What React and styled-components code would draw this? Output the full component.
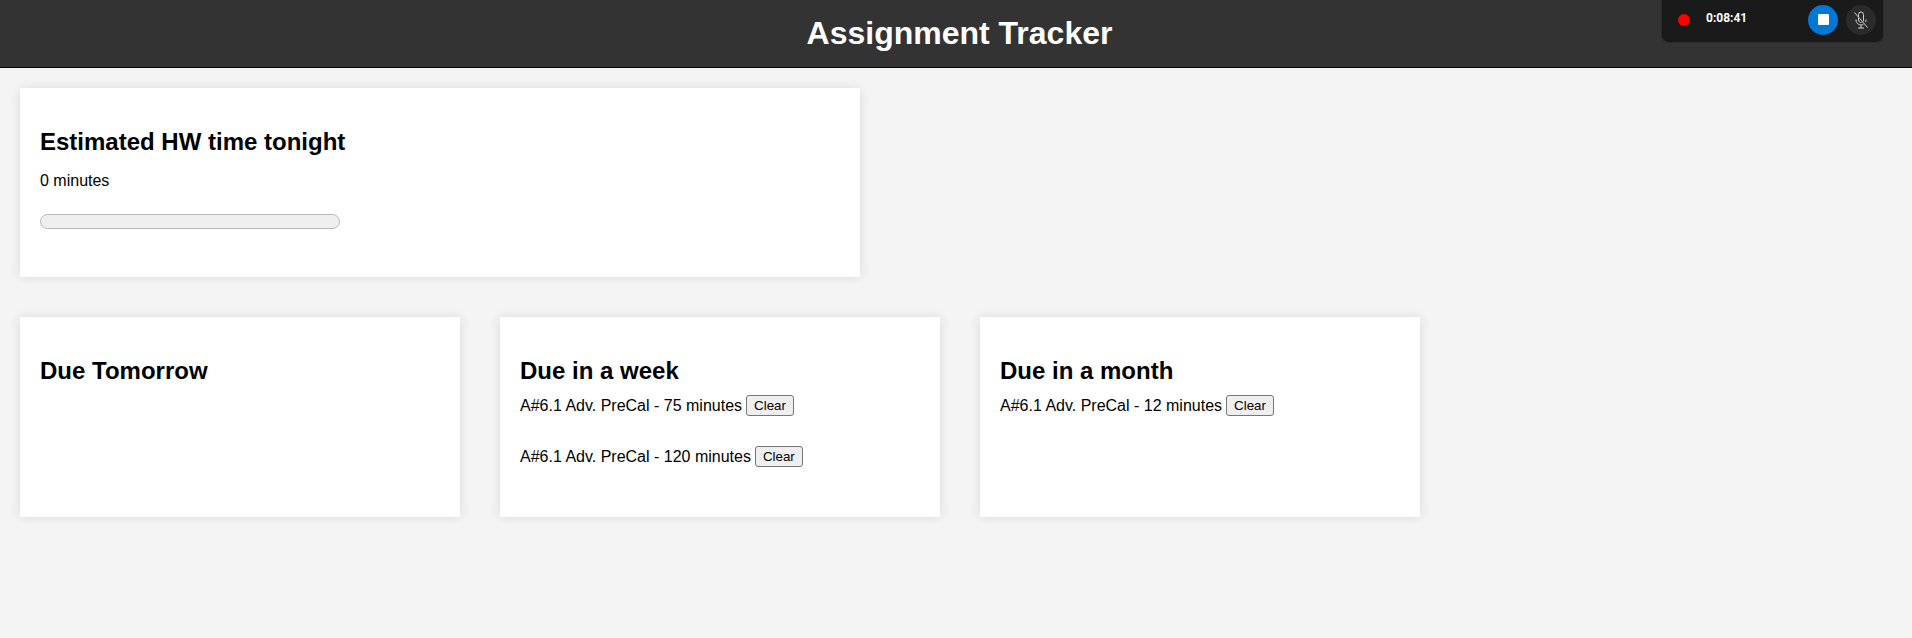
import * as React from 'react';
import styled, { createGlobalStyle } from 'styled-components';

const GlobalStyle = createGlobalStyle`
  html, body {
    margin: 0;
    padding: 0;
    min-height: 638px;
    background: #f4f4f4;
    color: #000;
    font-family: "Liberation Sans", Arial, sans-serif;
    font-size: 16px;
    overflow: hidden;
  }
`;

const Header = styled.header`
  position: relative;
  height: 67px;
  padding-left: 7px;
  display: flex;
  align-items: center;
  justify-content: center;
  background: #333;
  border-bottom: 1px solid #000;
`;

const PageTitle = styled.h1`
  margin: 0;
  color: #fff;
  font-size: 32px;
  font-weight: bold;
`;

const Recorder = styled.div`
  position: absolute;
  top: -1px;
  left: 1661px;
  width: 223px;
  height: 44px;
  box-sizing: border-box;
  display: flex;
  align-items: center;
  padding: 0 7px 2px 16px;
  background: #1a1a1a;
  border: 1px solid #2c2c2c;
  border-top: 0;
  border-radius: 0 0 8px 8px;
`;

const RecDot = styled.span`
  width: 12px;
  height: 12px;
  border-radius: 50%;
  background: #f00;
`;

const Timer = styled.span`
  margin: 0 auto 3px 16px;
  color: #fff;
  font-family: Roboto, sans-serif;
  font-size: 12px;
  font-weight: 700;
`;

const RoundButton = styled.span`
  width: 30px;
  height: 30px;
  margin-left: 8px;
  border-radius: 50%;
  display: flex;
  align-items: center;
  justify-content: center;
  background: ${props => (props.$primary ? '#0078d4' : '#2b2b2b')};
`;

const StopSquare = styled.span`
  width: 11px;
  height: 11px;
  border-radius: 1px;
  background: #fff;
`;

const Main = styled.main`
  padding: 20px;
  display: flex;
  flex-direction: column;
  gap: 40px;
`;

const Row = styled.div`
  display: flex;
  gap: 40px;
`;

const Card = styled.section`
  box-sizing: border-box;
  width: ${props => props.$width}px;
  height: ${props => props.$height}px;
  padding: 40px 20px 20px;
  background: #fff;
  box-shadow: 0 0 10px rgba(0, 0, 0, 0.1);
`;

const CardTitle = styled.h2`
  margin: 0 0 ${props => props.$gap}px;
  font-size: 24px;
  line-height: 27px;
  font-weight: bold;
`;

const Minutes = styled.p`
  margin: 0 0 24px;
  line-height: 19px;
`;

const Progress = styled.div`
  box-sizing: border-box;
  width: 300px;
  height: 15px;
  background: #efefef;
  border: 1px solid #b8b8b8;
  border-radius: 8px;
`;

const Item = styled.div`
  height: 21px;
  margin-bottom: 30px;
  display: flex;
  align-items: center;
  gap: 4px;
  line-height: 21px;
`;

const ClearButton = styled.button`
  box-sizing: border-box;
  height: 21px;
  padding: 1px 7px;
  font-family: "Liberation Sans", Arial, sans-serif;
  font-size: 13.33px;
  color: #000;
  background: #efefef;
  border: 1px solid #767676;
  border-radius: 3px;
`;

const MicOff = () => (
  <svg width="18" height="18" viewBox="0 0 18 18" fill="none" stroke="#d0d0d0" strokeWidth="1">
    <path d="M6.5 6V3.5a2.5 2.5 0 0 1 5 0v5.5a2.5 2.5 0 0 1-.7 1.7" />
    <path d="M6.5 7v2a2.5 2.5 0 0 0 3.2 2.4" />
    <path d="M4 8.500v.5a5 5 0 0 0 7.500 4.300M14 8.500v.5a5 5 0 0 1-.5 2.200" />
    <path d="M9 14v3M6 17h6M2.500 1.500l13 15" />
  </svg>
);

const columns = [
  { title: 'Due Tomorrow', items: [] },
  { title: 'Due in a week', items: ['A#6.1 Adv. PreCal - 75 minutes', 'A#6.1 Adv. PreCal - 120 minutes'] },
  { title: 'Due in a month', items: ['A#6.1 Adv. PreCal - 12 minutes'] },
];

export default function App() {
  return (
    <>
      <GlobalStyle />
      <Header>
        <PageTitle>Assignment Tracker</PageTitle>
        <Recorder>
          <RecDot />
          <Timer>0:08:41</Timer>
          <RoundButton $primary>
            <StopSquare />
          </RoundButton>
          <RoundButton>
            <MicOff />
          </RoundButton>
        </Recorder>
      </Header>
      <Main>
        <Card $width={840} $height={189}>
          <CardTitle $gap={16}>Estimated HW time tonight</CardTitle>
          <Minutes>0 minutes</Minutes>
          <Progress />
        </Card>
        <Row>
          {columns.map(column => (
            <Card key={column.title} $width={440} $height={200}>
              <CardTitle $gap={11}>{column.title}</CardTitle>
              {column.items.map(item => (
                <Item key={item}>
                  {item}
                  <ClearButton>Clear</ClearButton>
                </Item>
              ))}
            </Card>
          ))}
        </Row>
      </Main>
    </>
  );
}
